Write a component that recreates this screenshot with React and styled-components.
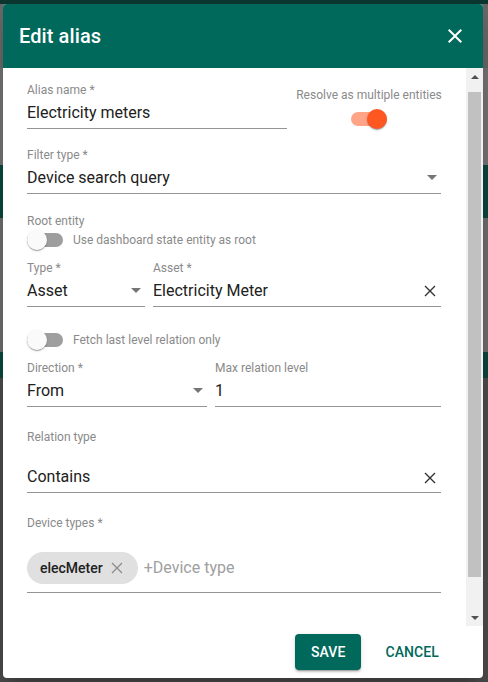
import React from "react";
import styled, { createGlobalStyle } from "styled-components";

const Global = createGlobalStyle`
  html, body { margin: 0; padding: 0; }
  body {
    width: 488px;
    height: 682px;
    overflow: hidden;
    font-family: Roboto, "Liberation Sans", Arial, sans-serif;
    background: linear-gradient(to bottom,
      #0c3630 0 4px,
      #686868 4px 68px,
      #747474 68px 165px,
      #0b463e 165px 218px,
      #6e6e6e 218px 352px,
      #0b463e 352px 378px,
      #4c4c4c 378px 682px);
  }
  * { box-sizing: border-box; }
`;

const Backdrop = styled.div`
  height: 682px;
  padding: 4px 5px 4px 3px;
  display: flex;
`;

const Dialog = styled.div`
  width: 480px;
  height: 674px;
  background: #fff;
  border-radius: 4px;
  overflow: hidden;
  display: flex;
  flex-direction: column;
  box-shadow: 0 11px 15px -7px rgba(0,0,0,.2), 0 24px 38px 3px rgba(0,0,0,.14);
`;

const Header = styled.div`
  height: 64px;
  flex: none;
  background: #00695c;
  color: #fff;
  display: flex;
  align-items: center;
  justify-content: space-between;
  padding: 0 16px 0 16px;
`;

const Title = styled.h2`
  margin: 0;
  font-size: 20px;
  font-weight: 500;
  letter-spacing: 0.1px;
`;

const IconButton = styled.button`
  width: 24px;
  height: 24px;
  padding: 0;
  border: 0;
  background: transparent;
  color: inherit;
  display: flex;
  align-items: center;
  justify-content: center;
`;

const Body = styled.div`
  height: 558px;
  flex: none;
  display: flex;
`;

const Form = styled.div`
  flex: 1;
  padding: 15px 25px 0 24px;
  display: flex;
  flex-direction: column;
`;

const Row = styled.div`
  display: flex;
  gap: ${p => p.$gap || 8}px;
  margin-top: ${p => p.$mt || 0}px;
`;

const Field = styled.div`
  display: flex;
  flex-direction: column;
  width: ${p => (p.$w ? p.$w + "px" : "auto")};
  flex: ${p => (p.$grow ? "1 1 0" : "none")};
  margin-top: ${p => p.$mt || 0}px;
`;

const Label = styled.div`
  font-size: 12px;
  line-height: 14px;
  color: #8a8a8a;
  white-space: nowrap;
  margin-top: ${p => p.$mt || 0}px;
`;

const InputLine = styled.div`
  height: ${p => p.$h || 32}px;
  border-bottom: 1px solid #949494;
  display: flex;
  align-items: ${p => (p.$bottom ? "flex-end" : "center")};
  padding-bottom: ${p => p.$pb || 0}px;
  gap: 8px;
`;

const Value = styled.div`
  flex: 1;
  font-size: 16px;
  line-height: 20px;
  color: #212121;
  white-space: nowrap;
`;

const Placeholder = styled(Value)`
  color: #a0a0a0;
  line-height: 32px;
  margin-left: -2px;
`;

const SideToggle = styled.div`
  width: 144px;
  flex: none;
  display: flex;
  flex-direction: column;
  align-items: center;
  padding-top: 5px;
  gap: 10px;
`;

const ToggleRow = styled.div`
  height: 20px;
  display: flex;
  align-items: center;
  gap: 10px;
  margin-top: ${p => p.$mt || 0}px;
`;

const ToggleText = styled.span`
  font-size: 12px;
  color: #8a8a8a;
`;

const Track = styled.div`
  position: relative;
  width: 36px;
  height: 14px;
  border-radius: 7px;
  flex: none;
  background: ${p => (p.$on ? "rgba(255,87,34,.54)" : "rgba(0,0,0,.38)")};
`;

const Thumb = styled.div`
  position: absolute;
  top: -3px;
  left: ${p => (p.$on ? "16px" : "0")};
  width: 20px;
  height: 20px;
  border-radius: 50%;
  background: ${p => (p.$on ? "#ff5722" : "#fafafa")};
  box-shadow: 0 2px 1px -1px rgba(0,0,0,.2), 0 1px 1px 0 rgba(0,0,0,.14), 0 1px 3px 0 rgba(0,0,0,.12);
`;

const Toggle = ({ on }) => (
  <Track $on={on}>
    <Thumb $on={on} />
  </Track>
);

const Arrow = styled.span`
  width: 0;
  height: 0;
  border-left: 5px solid transparent;
  border-right: 5px solid transparent;
  border-top: 5px solid #757575;
  margin-right: 4px;
  flex: none;
`;

const ClearBox = styled.span`
  display: flex;
  margin-right: 2px;
  color: #333;
`;

const CloseSvg = ({ size = 24, color = "currentColor" }) => (
  <svg width={size} height={size} viewBox="0 0 24 24">
    <path
      fill={color}
      d="M19 6.41L17.59 5 12 10.59 6.41 5 5 6.41 10.59 12 5 17.59 6.41 19 12 13.41 17.59 19 19 17.59 13.41 12z"
    />
  </svg>
);

const ThinX = ({ size = 18, color = "#333", w = 1.4 }) => (
  <svg width={size} height={size} viewBox="0 0 18 18">
    <path d="M4 4L14 14M14 4L4 14" stroke={color} strokeWidth={w} fill="none" />
  </svg>
);

const Chip = styled.div`
  height: 32px;
  border-radius: 16px;
  background: #e0e0e0;
  display: flex;
  align-items: center;
  padding: 0 12px 0 13px;
  gap: 5px;
  font-size: 14px;
  font-weight: 500;
  color: #212121;
  flex: none;
`;

const Scrollbar = styled.div`
  width: 17px;
  flex: none;
  background: #f1f1f1;
  display: flex;
  flex-direction: column;
`;

const ScrollBtn = styled.div`
  height: 17px;
  display: flex;
  align-items: center;
  justify-content: center;
  padding-left: 1px;
`;

const Tri = styled.span`
  width: 0;
  height: 0;
  border-left: 4px solid transparent;
  border-right: 4px solid transparent;
  ${p =>
    p.$up
      ? "border-bottom: 4px solid #505050;"
      : "border-top: 4px solid #505050;"}
`;

const ScrollThumb = styled.div`
  margin: 7px 2px 0 2px;
  height: 485px;
  background: #c1c1c1;
`;

const Spacer = styled.div`
  flex: 1;
`;

const Actions = styled.div`
  flex: 1;
  display: flex;
  align-items: center;
  justify-content: flex-end;
  gap: 8px;
  padding-right: 28px;
`;

const Button = styled.button`
  height: 36px;
  border: 0;
  border-radius: 4px;
  padding: 0 16px;
  font-family: inherit;
  font-size: 14px;
  font-weight: 500;
  letter-spacing: 0.1px;
  text-transform: uppercase;
  background: ${p => (p.$primary ? "#00695c" : "transparent")};
  color: ${p => (p.$primary ? "#fff" : "#00695c")};
  box-shadow: ${p =>
    p.$primary
      ? "0 3px 1px -2px rgba(0,0,0,.2), 0 2px 2px 0 rgba(0,0,0,.14), 0 1px 5px 0 rgba(0,0,0,.12)"
      : "none"};
`;

export default function App() {
  return (
    <>
      <Global />
      <Backdrop>
        <Dialog>
          <Header>
            <Title>Edit alias</Title>
            <IconButton>
              <CloseSvg size={24} color="#fff" />
            </IconButton>
          </Header>
          <Body>
            <Form>
              <Row $gap={10}>
                <Field $w={260}>
                  <Label>Alias name *</Label>
                  <InputLine $h={32}>
                    <Value>Electricity meters</Value>
                  </InputLine>
                </Field>
                <SideToggle>
                  <Label>Resolve as multiple entities</Label>
                  <Toggle on />
                </SideToggle>
              </Row>

              <Field $mt={19}>
                <Label>Filter type *</Label>
                <InputLine>
                  <Value>Device search query</Value>
                  <Arrow />
                </InputLine>
              </Field>

              <Label $mt={20}>Root entity</Label>
              <ToggleRow $mt={2}>
                <Toggle />
                <ToggleText>Use dashboard state entity as root</ToggleText>
              </ToggleRow>

              <Row $mt={11}>
                <Field $w={118}>
                  <Label>Type *</Label>
                  <InputLine>
                    <Value>Asset</Value>
                    <Arrow />
                  </InputLine>
                </Field>
                <Field $grow>
                  <Label>Asset *</Label>
                  <InputLine>
                    <Value>Electricity Meter</Value>
                    <ClearBox>
                      <ThinX />
                    </ClearBox>
                  </InputLine>
                </Field>
              </Row>

              <ToggleRow $mt={23}>
                <Toggle />
                <ToggleText>Fetch last level relation only</ToggleText>
              </ToggleRow>

              <Row $mt={11}>
                <Field $w={180}>
                  <Label>Direction *</Label>
                  <InputLine>
                    <Value>From</Value>
                    <Arrow />
                  </InputLine>
                </Field>
                <Field $grow>
                  <Label>Max relation level</Label>
                  <InputLine>
                    <Value>1</Value>
                  </InputLine>
                </Field>
              </Row>

              <Field $mt={23}>
                <Label>Relation type</Label>
                <InputLine $h={49} $bottom $pb={5}>
                  <Value>Contains</Value>
                  <ClearBox>
                    <ThinX />
                  </ClearBox>
                </InputLine>
              </Field>

              <Field $mt={23}>
                <Label>Device types *</Label>
                <InputLine $h={63} $bottom $pb={8}>
                  <Chip>
                    elecMeter
                    <ThinX color="#8a8a8a" w={1.2} />
                  </Chip>
                  <Placeholder>+Device type</Placeholder>
                </InputLine>
              </Field>
            </Form>
            <Scrollbar>
              <ScrollBtn>
                <Tri $up />
              </ScrollBtn>
              <ScrollThumb />
              <Spacer />
              <ScrollBtn>
                <Tri />
              </ScrollBtn>
            </Scrollbar>
          </Body>
          <Actions>
            <Button $primary>Save</Button>
            <Button>Cancel</Button>
          </Actions>
        </Dialog>
      </Backdrop>
    </>
  );
}
